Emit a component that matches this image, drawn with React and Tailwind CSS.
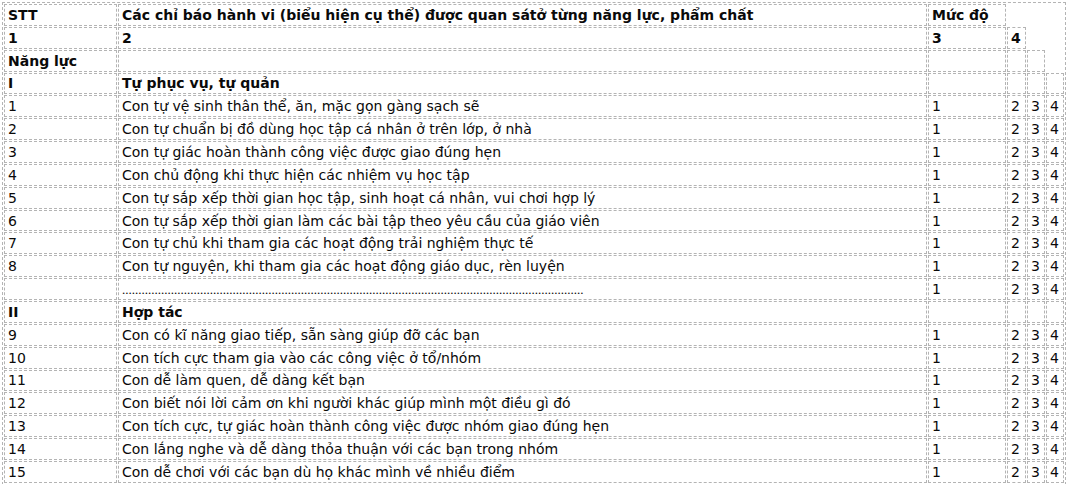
import React from "react";

const B = "border border-dashed border-[#b4b4b4] px-[3px] py-0 align-middle h-[21.85px] leading-[16px]";

const group1 = [
  ["1", "Con tự vệ sinh thân thể, ăn, mặc gọn gàng sạch sẽ"],
  ["2", "Con tự chuẩn bị đồ dùng học tập cá nhân ở trên lớp, ở nhà"],
  ["3", "Con tự giác hoàn thành công việc được giao đúng hẹn"],
  ["4", "Con chủ động khi thực hiện các nhiệm vụ học tập"],
  ["5", "Con tự sắp xếp thời gian học tập, sinh hoạt cá nhân, vui chơi hợp lý"],
  ["6", "Con tự sắp xếp thời gian làm các bài tập theo yêu cầu của giáo viên"],
  ["7", "Con tự chủ khi tham gia các hoạt động trải nghiệm thực tế"],
  ["8", "Con tự nguyện, khi tham gia các hoạt động giáo dục, rèn luyện"],
];

const group2 = [
  ["9", "Con có kĩ năng giao tiếp, sẵn sàng giúp đỡ các bạn"],
  ["10", "Con tích cực tham gia vào các công việc ở tổ/nhóm"],
  ["11", "Con dễ làm quen, dễ dàng kết bạn"],
  ["12", "Con biết nói lời cảm ơn khi người khác giúp mình một điều gì đó"],
  ["13", "Con tích cực, tự giác hoàn thành công việc được nhóm giao đúng hẹn"],
  ["14", "Con lắng nghe và dễ dàng thỏa thuận với các bạn trong nhóm"],
  ["15", "Con dễ chơi với các bạn dù họ khác mình về nhiều điểm"],
];

function DataRow({ n, text }) {
  return (
    <tr>
      <td className={B}>{n}</td>
      <td className={B}>{text}</td>
      <td className={B}>1</td>
      <td className={B}>2</td>
      <td className={B}>3</td>
      <td className={B}>4</td>
    </tr>
  );
}

export default function App() {
  return (
    <div
      className="bg-white p-[2px] text-[14px] text-[#0a0a0a] w-[1072px] h-[484px] overflow-hidden"
      style={{ fontFamily: '"DejaVu Sans", Verdana, sans-serif' }}
    >
      <table className="table-fixed w-[1064px] border-separate border-spacing-[1px] border border-dashed border-[#b4b4b4]">
        <colgroup>
          <col className="w-[113px]" />
          <col className="w-[809px]" />
          <col className="w-[78px]" />
          <col className="w-[19px]" />
          <col className="w-[18px]" />
          <col className="w-[18px]" />
        </colgroup>
        <tbody>
          <tr className="font-bold">
            <td className={B}>STT</td>
            <td className={B}>Các chỉ báo hành vi (biểu hiện cụ thể) được quan sátở từng năng lực, phẩm chất</td>
            <td className={B}>Mức độ</td>
          </tr>
          <tr className="font-bold">
            <td className={B}>1</td>
            <td className={B}>2</td>
            <td className={B}>3</td>
            <td className={B}>4</td>
          </tr>
          <tr>
            <td className={B + " font-bold"}>Năng lực</td>
            <td className={B}></td>
            <td className={B}></td>
            <td className={B}></td>
            <td className={B}></td>
          </tr>
          <tr className="font-bold">
            <td className={B}>I</td>
            <td className={B}>Tự phục vụ, tự quản</td>
            <td className={B}></td>
            <td className={B}></td>
            <td className={B}></td>
            <td className={B}></td>
          </tr>
          {group1.map(([n, t]) => (
            <DataRow key={"a" + n} n={n} text={t} />
          ))}
          <tr>
            <td className={B}></td>
            <td className={B}>
              <span
                className="text-[13px]"
                style={{ fontFamily: '"Liberation Serif", serif' }}
              >
                {".".repeat(142)}
              </span>
            </td>
            <td className={B}>1</td>
            <td className={B}>2</td>
            <td className={B}>3</td>
            <td className={B}>4</td>
          </tr>
          <tr className="font-bold">
            <td className={B}>II</td>
            <td className={B}>Hợp tác</td>
            <td className={B}></td>
            <td className={B}></td>
            <td className={B}></td>
            <td className={B}></td>
          </tr>
          {group2.map(([n, t]) => (
            <DataRow key={"b" + n} n={n} text={t} />
          ))}
        </tbody>
      </table>
    </div>
  );
}
